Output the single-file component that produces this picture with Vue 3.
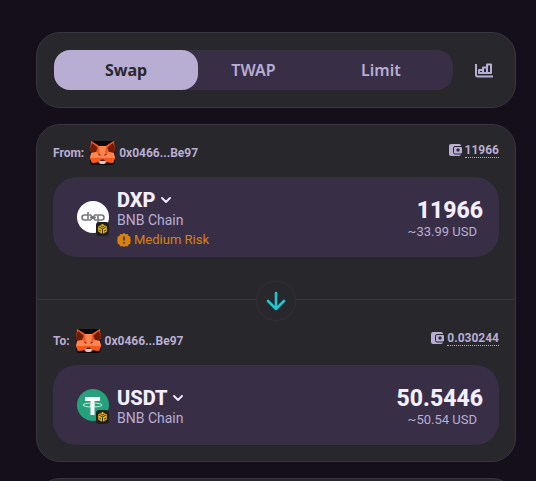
<template>
  <main class="page">
    <section class="card mode-card">
      <div class="tabs">
        <button
          v-for="mode in modes"
          :key="mode"
          type="button"
          class="tab"
          :class="{ active: mode === activeMode }"
          :aria-pressed="mode === activeMode"
          @click="activeMode = mode"
        >
          {{ mode }}
        </button>
      </div>
      <button type="button" class="chart-btn" aria-label="Toggle chart">
        <svg width="18" height="16" viewBox="0 0 18 16" fill="none" stroke="currentColor" stroke-width="2">
          <path d="M1 2v10.500q0 2 1.500 2H18" />
          <path d="M4 11V8h4v3zM8 11V5.500h4V11zM12 11V2.500h4V11z" stroke-width="2" stroke-linejoin="round" />
        </svg>
      </button>
    </section>

    <section class="card swap-card">
      <template v-for="(side, index) in sides" :key="side.id">
        <div v-if="index === 1" class="divider">
          <button type="button" class="flip" aria-label="Switch tokens" @click="flip">
            <svg width="20" height="20" viewBox="0 0 20 20" fill="none" stroke="currentColor" stroke-width="2.600" stroke-linecap="round" stroke-linejoin="round">
              <path d="M10 2v16M2 10l8 8 8-8" />
            </svg>
          </button>
        </div>

        <div class="account">
          <span class="direction">{{ side.label }}:</span>
          <svg class="fox" width="25" height="24" viewBox="0 0 25 24">
            <rect width="25" height="24" rx="4" fill="#09090c" />
            <path d="M1 0l8 5h7l8-5 1 9-1.500 3L25 17l-2 5-6-1-2 2h-5l-2-2-6 1-2-5 1.500-5L0 9z" fill="#f4581b" />
            <path d="M2 2l6 4-2 5-5 1-1-4zM23 2l-6 4 2 5 5 1 1-4z" fill="#6d1c06" />
            <path d="M1 0l8 5-1 2zM24 0l-8 5 1 2z" fill="#f4581b" />
            <path d="M9 5h7l-1 9 1 3h-7l1-3z" fill="#ff8653" />
            <path d="M1 12l6-1 3 4-2 2H0zM24 12l-6-1-3 4 2 2h8z" fill="#ff8653" />
            <path d="M0 17h8l1 4-7 1zM25 17h-8l-1 4 7 1z" fill="#f4581b" />
            <path d="M7 12.500l3.500 1v1.500zM18 12.500l-3.500 1v1.500z" fill="#7c2410" />
            <path d="M9.500 20h6l.500 1-2 2h-3l-2-2z" fill="#d9c8c6" />
            <path d="M11 18.500h3l1 1.500h-5z" fill="#4e211c" />
          </svg>
          <span class="address">0x0466...Be97</span>
          <button type="button" class="balance" @click="useBalance(side)">
            <svg width="13" height="12" viewBox="0 0 13 12">
              <rect width="12" height="12" rx="2" fill="currentColor" />
              <rect x="4.500" y="2.500" width="9" height="7.500" rx="1.500" fill="currentColor" stroke="#28272c" />
              <rect x="7.500" y="4.500" width="3" height="3" rx="1" fill="#28272c" />
            </svg>
            <span>{{ side.balance }}</span>
          </button>
        </div>

        <div class="token-box">
          <button type="button" class="token">
            <span class="logo">
              <svg v-if="side.token === 'DXP'" width="32" height="32" viewBox="0 0 32 32" fill="none" stroke="#77777b" stroke-width="1.600">
                <circle cx="16" cy="16" r="16" fill="#fff" stroke="none" />
                <path d="M11 11v8H7.500a2.500 2.500 0 0 1 0-5H11" />
                <path d="M12 14h1.500l4.500 5h2M12 19h1.500l4.500-5h2M13 16.500h6" />
                <path d="M21 22v-8h3.500a2.500 2.500 0 0 1 0 5H21" />
              </svg>
              <svg v-else width="32" height="32" viewBox="0 0 32 32">
                <circle cx="16" cy="16" r="16" fill="#26a17b" />
                <path d="M8 8h15v4h-5.500v14h-4V12H8z" fill="#fff" />
                <ellipse cx="15.500" cy="16" rx="9.500" ry="2" fill="none" stroke="#d9f0e8" stroke-width="0.900" />
                <path d="M13.500 15.500h4v2h-4z" fill="#fff" />
              </svg>
              <svg class="chain-badge" width="13" height="14" viewBox="0 0 13 14">
                <rect width="13" height="14" rx="3" fill="#1e1f20" />
                <path d="M6.500 2l4.300 2.500v5L6.500 12 2.200 9.500v-5z" fill="#f0b90b" />
                <path d="M3 5l3.500 2L10 5M6.500 7v5M4.500 3.700l2 1.200 2-1.200M3 8l2 1.200M10 8l-2 1.200" fill="none" stroke="#1e1f20" stroke-width="0.900" />
              </svg>
            </span>
            <span class="token-info">
              <span class="symbol">
                {{ side.token }}
                <svg width="10" height="6" viewBox="0 0 10 6" fill="none" stroke="currentColor" stroke-width="1.800" stroke-linecap="round" stroke-linejoin="round">
                  <path d="M1 1l4 4 4-4" />
                </svg>
              </span>
              <span class="chain">BNB Chain</span>
              <span v-if="side.risk" class="risk">
                <svg width="14" height="14" viewBox="0 0 14 14">
                  <path d="M7 0l1.700 1.300 2.100-.300.800 2 2 .800-.300 2.100L14 7l-.700 1.500.300 2-2 .900-.800 2-2.100-.300L7 14l-1.700-.900-2.100.300-.800-2-2-.900.300-2L0 7l.700-1.100L.400 3.800l2-.800.800-2 2.100.300z" fill="currentColor" />
                  <path d="M7 3.500v4M7 9v1.600" stroke="#382f47" stroke-width="1.600" />
                </svg>
                {{ side.risk }}
              </span>
            </span>
          </button>
          <div class="amounts">
            <input
              v-model="side.amount"
              class="amount"
              type="text"
              inputmode="decimal"
              :aria-label="`${side.label} amount`"
              :readonly="index === 1"
            />
            <span class="usd">~{{ side.usd }} USD</span>
          </div>
        </div>
      </template>
    </section>

    <section class="card next-card"></section>
  </main>
</template>

<script setup>
import { ref } from "vue";

const modes = ["Swap", "TWAP", "Limit"];
const activeMode = ref("Swap");

const sides = ref([
  {
    id: "from",
    label: "From",
    token: "DXP",
    balance: "11966",
    amount: "11966",
    usd: "33.99",
    risk: "Medium Risk",
  },
  {
    id: "to",
    label: "To",
    token: "USDT",
    balance: "0.030244",
    amount: "50.5446",
    usd: "50.54",
    risk: "",
  },
]);

const flip = () => {
  const [from, to] = sides.value;
  sides.value = [
    { ...to, id: from.id, label: from.label },
    { ...from, id: to.id, label: to.label },
  ];
};

const useBalance = (side) => {
  if (side.id === "from") {
    side.amount = side.balance;
  }
};
</script>

<style>
body {
  background: #150f1b;
}
</style>

<style scoped>
.page {
  display: flex;
  flex-direction: column;
  gap: 16px;
  box-sizing: border-box;
  height: 100vh;
  overflow-y: auto;
  scrollbar-width: none;
  padding: 32px 20px 0 36px;
  color: #b8add2;
  font-family: Roboto, "Noto Sans", sans-serif;
}
button,
input {
  margin: 0;
  padding: 0;
  border: 0;
  background: none;
  color: inherit;
  font: inherit;
}
button {
  cursor: pointer;
}
svg {
  display: block;
  flex: none;
}
.card {
  flex: none;
  border: 1px solid #38353e;
  border-radius: 24px;
  background: #28272c;
}
.mode-card {
  display: flex;
  align-items: center;
  padding: 17px;
}
.tabs {
  flex: 1;
  display: grid;
  grid-template-columns: 13fr 10fr 13fr;
  border-radius: 16px;
  background: #382f47;
}
.tab {
  height: 40px;
  border-radius: 16px;
  font-family: "Noto Sans", sans-serif;
  font-size: 16px;
  font-weight: 600;
}
.tab.active {
  background: #b8add2;
  color: #28272c;
  font-weight: 700;
}
.chart-btn {
  padding: 0 5px 0 22px;
}
.swap-card {
  padding: 16px;
}
.account {
  display: flex;
  align-items: center;
  height: 24px;
  margin-bottom: 12px;
  font-size: 12px;
  font-weight: 700;
}
.fox {
  margin: 0 4px 0 6px;
}
.balance {
  display: flex;
  align-items: center;
  gap: 3px;
  height: 16px;
  margin: 0 0 6px auto;
}
.balance span {
  border-bottom: 1px dotted #b8add2;
  line-height: 14px;
}
.token-box {
  display: flex;
  align-items: center;
  justify-content: space-between;
  height: 80px;
  padding: 0 16px 0 24px;
  border-radius: 24px;
  background: #382f47;
}
.token {
  display: flex;
  align-items: center;
  gap: 8px;
  text-align: left;
}
.logo {
  position: relative;
}
.chain-badge {
  position: absolute;
  right: 0;
  bottom: -3px;
}
.token-info {
  display: flex;
  flex-direction: column;
  padding-top: 6px;
  line-height: 20px;
}
.symbol {
  display: flex;
  align-items: center;
  gap: 6px;
  color: #f4eeff;
  font-size: 20px;
  font-weight: 800;
}
.chain {
  font-size: 14px;
}
.risk {
  display: flex;
  align-items: center;
  gap: 3px;
  color: #d9820b;
  font-size: 13px;
}
.amounts {
  flex: 1;
  display: flex;
  flex-direction: column;
  align-items: flex-end;
  min-width: 0;
  padding-top: 6px;
}
.amount {
  width: 100%;
  height: 24px;
  color: #f4eeff;
  font-size: 23px;
  font-weight: 800;
  text-align: right;
  outline: none;
}
.usd {
  padding-right: 6px;
  font-size: 13px;
  line-height: 20px;
}
.divider {
  display: flex;
  align-items: center;
  height: 40px;
  margin: 24px -16px 8px;
}
.divider::before,
.divider::after {
  content: "";
  flex: 1;
  height: 1px;
  margin-bottom: 4px;
  background: #38353e;
}
.flip {
  display: grid;
  place-items: center;
  width: 40px;
  height: 40px;
  border: 1px solid #323037;
  border-radius: 50%;
  color: #22c3d2;
}
.next-card {
  height: 60px;
}
</style>
